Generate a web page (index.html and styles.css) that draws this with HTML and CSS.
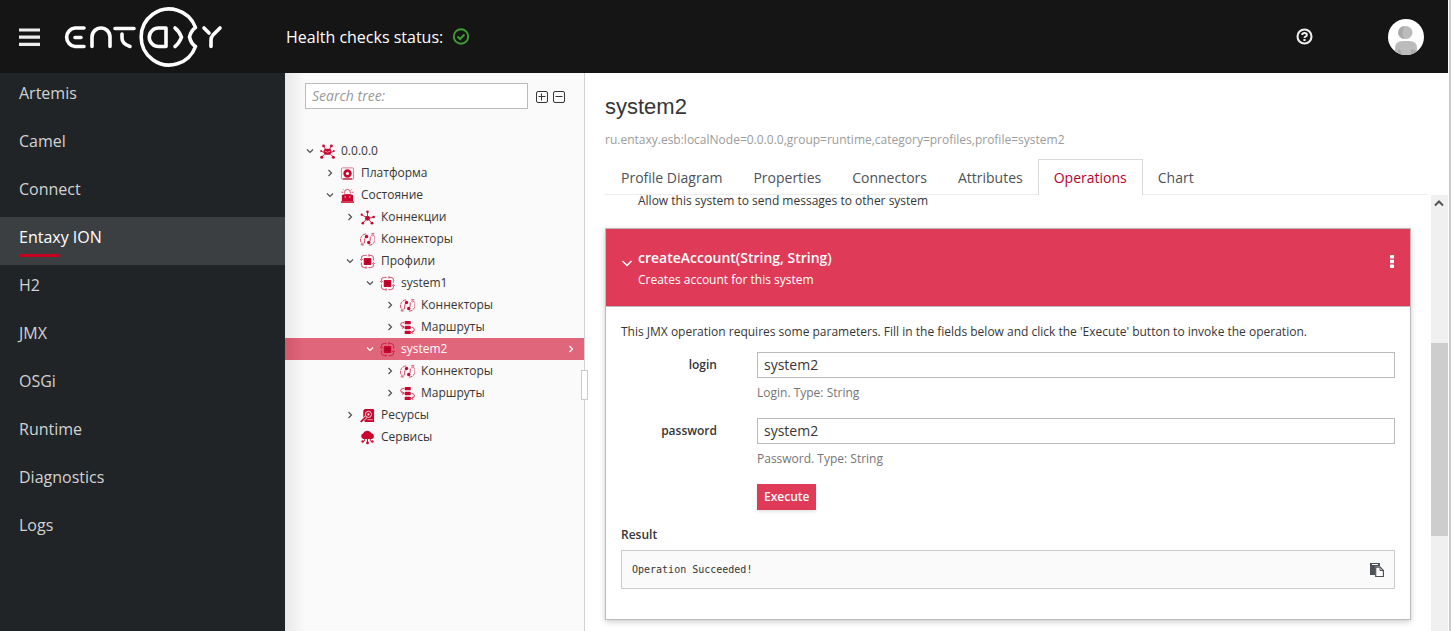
FILE: index.html
```html
<!DOCTYPE html>
<html lang="ru">
<head>
<meta charset="utf-8">
<title>Entaxy ION</title>
<link rel="stylesheet" href="styles.css">
</head>
<body>
<svg class="sprite" aria-hidden="true">
  <symbol id="down" viewBox="0 0 10 10"><path d="M2 3.500 5 6.500 8 3.500" fill="none" stroke="currentColor" stroke-width="1.200"/></symbol>
  <symbol id="right" viewBox="0 0 10 10"><path d="M3.500 2 6.500 5 3.500 8" fill="none" stroke="currentColor" stroke-width="1.200"/></symbol>
  <symbol id="cluster" viewBox="0 0 16 16"><g fill="none" stroke="currentColor" stroke-width=".9"><path d="M4 2.500 6 6M12 2.500 10 6M1.500 8 4 8.500M14.500 8 12 8.500M2 13.500 5 11M14 13.500 11 11"/></g><path d="M4 6.500 5.500 5h5L12 6.500 12.500 9 10.500 11.500H5.500L3.500 9z" fill="currentColor"/><path d="M5 7.500q3 2.500 6 0" stroke="#f3b5c0" stroke-width=".8" fill="none"/><g fill="currentColor"><circle cx="3.800" cy="2" r="1.500"/><circle cx="12.200" cy="2" r="1.500"/><circle cx="1.200" cy="7.500" r="1"/><circle cx="14.800" cy="7.500" r="1"/><circle cx="1.800" cy="14" r="1.600"/><circle cx="14.200" cy="14" r="1.600"/></g></symbol>
  <symbol id="platform" viewBox="0 0 16 16"><rect x="1.500" y="2" width="13" height="12" rx="1" fill="none" stroke="currentColor" stroke-width=".9" opacity=".6"/><circle cx="8" cy="8" r="3.100" fill="none" stroke="currentColor" stroke-width="2.800"/><path d="M3 13.800h10" stroke="currentColor" stroke-width="1.200"/></symbol>
  <symbol id="state" viewBox="0 0 16 16"><path d="M2 7.500q6-2 12 0V14H2z" fill="currentColor"/><path d="M1 15h14" stroke="currentColor" stroke-width="1.600"/><path d="M5 6V4.500a3 3 0 0 1 6 0V6M1.500 4.500h2M12.500 4.500h2M3.500 1.500l1 1M12.500 1.500l-1 1" fill="none" stroke="currentColor" stroke-width=".9" opacity=".8"/><path d="M5.500 8.500v2M10.500 8.500v2" stroke="#f3b5c0" stroke-width="1"/></symbol>
  <symbol id="connections" viewBox="0 0 16 16"><path d="M8 8.500V2M8 8.500 1.500 5M8 8.500 14.500 8M8 8.500 3 14M8 8.500 12.500 14" stroke="currentColor" stroke-width=".9" fill="none"/><g fill="currentColor"><circle cx="8" cy="8.800" r="2.600"/><circle cx="8" cy="1.800" r="1.400"/><circle cx="1.800" cy="5" r="1.200"/><circle cx="14.500" cy="7.500" r="1.400"/><circle cx="3" cy="14" r="1.400"/><circle cx="12.800" cy="14" r="1.500"/></g></symbol>
  <symbol id="connector" viewBox="0 0 16 16"><g fill="none" stroke="currentColor" stroke-width="1" opacity=".8"><path d="M6.500 2A6.400 6.400 0 0 0 2.500 13M.8 13.500 3.500 14 3.200 11.300" stroke-dasharray="3.500 .7"/><path d="M9.500 14a6.400 6.400 0 0 0 4-11.500M15.200 2 12.500 1.700l.4 2.800" stroke-dasharray="3.500 .7"/><path d="M7 4.500Q4.500 6 5 12M9 12q2.500-2 2-7"/></g><circle cx="7" cy="4.800" r="1.800" fill="currentColor"/><circle cx="9.300" cy="11.200" r="1.800" fill="currentColor"/></symbol>
  <symbol id="profile" viewBox="0 0 16 16"><rect x="4" y="4.300" width="8" height="7.400" rx=".8" fill="currentColor"/><path d="M6 7h4M6 9h4" stroke="#8c001a" stroke-width=".7"/><g fill="none" stroke="currentColor" stroke-width="1" opacity=".75"><path d="M1.500 6V4.500A3 3 0 0 1 4.500 1.500H7M9.500 1.500h2A3 3 0 0 1 14.500 4.500V7M14.500 10v1.500a3 3 0 0 1-3 3H9M6.500 14.500h-2a3 3 0 0 1-3-3V9"/><path d="M.2 5.500 1.500 7 3 5.500M9.500.2v2.600M13 10.500l1.500-1.500 1.400 1.500M6.500 13.200v2.600"/></g></symbol>
  <symbol id="route" viewBox="0 0 16 16"><g fill="currentColor"><rect x="5" y="1" width="6.500" height="3.600" rx=".9"/><rect x="5" y="6.200" width="6.500" height="3.600" rx=".9"/><rect x="5" y="11.400" width="6.500" height="3.600" rx=".9"/></g><g fill="none" stroke="currentColor" stroke-width="1" opacity=".85"><path d="M4.200 2.800H2.500Q.8 3 .8 5q0 2 3 2.800M2.500 5.800l1.800 2-2 1.200M12.300 8h1.200q1.800.6 1.800 2.500 0 2-2.800 2.700M13.800 11.300l-1.600 1.900 2 1.300"/></g></symbol>
  <symbol id="resource" viewBox="0 0 16 16"><path d="M5 1h8.500A1.500 1.500 0 0 1 15 2.500V15H5.500L3.500 13V3z" fill="currentColor"/><circle cx="9" cy="6.800" r="3.300" fill="currentColor" stroke="#f9dfe4" stroke-width="1"/><circle cx="9" cy="6.800" r="1.200" fill="#f9dfe4"/><path d="M6.500 9.500 1 14.500" stroke="#fafafa" stroke-width="3.200"/><path d="M6.400 9.500 .8 14.700" stroke="currentColor" stroke-width="1.900"/><path d="M8 12.500h6" stroke="#f9dfe4" stroke-width=".7"/></symbol>
  <symbol id="service" viewBox="0 0 16 16"><path d="M3.500 9.500a3 3 0 0 1-.3-5.700A5 5 0 0 1 12.300 3.500a3.100 3.100 0 0 1 .5 6z" fill="currentColor"/><path d="M8 9v4M5 9.500v2L3 12.500M11 9.500v2l2 1" stroke="currentColor" fill="none"/><g fill="currentColor"><circle cx="8" cy="13.800" r="1.500"/><circle cx="2.800" cy="12.300" r="1.300"/><circle cx="13.200" cy="12.300" r="1.300"/></g></symbol>
</svg>

<header class="masthead">
  <button class="plain menu" aria-label="Menu"><svg width="21" height="18" viewBox="0 0 21 18"><path d="M0 2h21M0 9.200h21M0 16.300h21" stroke="#ededed" stroke-width="3.200"/></svg></button>
  <svg class="logo" width="160" height="62" viewBox="0 0 160 62" role="img" aria-label="Entaxy">
    <g fill="none" stroke="#fff" stroke-width="3.600" stroke-linecap="round" stroke-linejoin="round">
      <path d="M21 22H12a9.300 9.300 0 0 0 0 18.500h9M12 31.500h6"/>
      <path d="M29 40.500V31a9 9 0 0 1 18 0v9.500"/>
      <path d="M52 22.500h19M59 28v4q0 6 8 8.500"/>
      <path d="M103 40.500V22H95.500a9.250 9.250 0 0 0 0 18.500z"/>
      <path d="M112 22q4 3 6.500 9.200-2.500 6.300-6.500 9.300"/>
      <path d="M132.500 21.500a28 28 0 1 0 0 19q-4.500-3-6-9.500 1.500-6.500 6-9.500z"/>
      <path d="M141 22l5 5M157 22l-7 7q-2 2-2 5v6.500"/>
    </g>
  </svg>
  <p class="health">Health checks status:
    <svg width="18" height="18" viewBox="0 0 18 18" role="img" aria-label="OK"><circle cx="9" cy="8.500" r="7.200" fill="none" stroke="#3f9c35" stroke-width="1.900"/><path d="M5.500 8.500 8.100 11 12.500 6.500" fill="none" stroke="#3f9c35" stroke-width="2"/></svg>
  </p>
  <button class="plain help" aria-label="Help"><svg width="17" height="17" viewBox="0 0 17 17"><circle cx="8.500" cy="8.500" r="7" fill="none" stroke="#ededed" stroke-width="2.100"/><path d="M6.200 7Q6.200 4.900 8.500 4.900T10.900 6.900Q10.900 8 9.400 8.600 8.500 9 8.500 10" fill="none" stroke="#ededed" stroke-width="2"/><path d="M7.400 11h2.200v2H7.400z" fill="#ededed"/></svg></button>
  <button class="plain avatar" aria-label="User"><svg width="36" height="36" viewBox="0 0 36 36"><defs><clipPath id="round"><circle cx="18" cy="18" r="18"/></clipPath></defs><g clip-path="url(#round)"><path fill="#fff" d="M0 0h36v36H0z"/><circle cx="18" cy="13.500" r="6.500" fill="#bcbcbc"/><path d="M16.500 7a6.500 6.500 0 0 0 0 13q-4-6 0-13z" fill="#aaa"/><path d="M7 36v-7q0-7 8-7h6q8 0 8 7v7z" fill="#bcbcbc"/><path d="M10 36v-7l3 3v4zM23 36v-6l5 2v4z" fill="#aaa"/></g></svg></button>
</header>

<div class="shell">
  <nav class="sidebar">
    <a href="#">Artemis</a>
    <a href="#">Camel</a>
    <a href="#">Connect</a>
    <a href="#" class="current" aria-current="page">Entaxy ION</a>
    <a href="#">H2</a>
    <a href="#">JMX</a>
    <a href="#">OSGi</a>
    <a href="#">Runtime</a>
    <a href="#">Diagnostics</a>
    <a href="#">Logs</a>
  </nav>

  <aside class="tree-pane">
    <div class="search">
      <input type="search" placeholder="Search tree:" aria-label="Search tree">
      <button class="plain" aria-label="Expand all"><svg width="12" height="12" viewBox="0 0 12 12" fill="none" stroke="#363636"><rect x=".5" y=".5" width="11" height="11" rx="1.500"/><path d="M2.500 5.500h7M5.500 2.500v7"/></svg></button>
      <button class="plain" aria-label="Collapse all"><svg width="12" height="12" viewBox="0 0 12 12" fill="none" stroke="#363636"><rect x=".5" y=".5" width="11" height="11" rx="1.500"/><path d="M2.500 5.500h7"/></svg></button>
    </div>
    <ul class="tree">
      <li class="l0"><svg class="tw"><use href="#down"/></svg><svg class="ic"><use href="#cluster"/></svg><span>0.0.0.0</span></li>
      <li class="l1"><svg class="tw"><use href="#right"/></svg><svg class="ic"><use href="#platform"/></svg><span>Платформа</span></li>
      <li class="l1"><svg class="tw"><use href="#down"/></svg><svg class="ic"><use href="#state"/></svg><span>Состояние</span></li>
      <li class="l2"><svg class="tw"><use href="#right"/></svg><svg class="ic"><use href="#connections"/></svg><span>Коннекции</span></li>
      <li class="l2"><svg class="tw"></svg><svg class="ic"><use href="#connector"/></svg><span>Коннекторы</span></li>
      <li class="l2"><svg class="tw"><use href="#down"/></svg><svg class="ic"><use href="#profile"/></svg><span>Профили</span></li>
      <li class="l3"><svg class="tw"><use href="#down"/></svg><svg class="ic"><use href="#profile"/></svg><span>system1</span></li>
      <li class="l4"><svg class="tw"><use href="#right"/></svg><svg class="ic"><use href="#connector"/></svg><span>Коннекторы</span></li>
      <li class="l4"><svg class="tw"><use href="#right"/></svg><svg class="ic"><use href="#route"/></svg><span>Маршруты</span></li>
      <li class="l3 selected"><svg class="tw"><use href="#down"/></svg><svg class="ic"><use href="#profile"/></svg><span>system2</span><svg class="tw go"><use href="#right"/></svg></li>
      <li class="l4"><svg class="tw"><use href="#right"/></svg><svg class="ic"><use href="#connector"/></svg><span>Коннекторы</span></li>
      <li class="l4"><svg class="tw"><use href="#right"/></svg><svg class="ic"><use href="#route"/></svg><span>Маршруты</span></li>
      <li class="l2"><svg class="tw"><use href="#right"/></svg><svg class="ic"><use href="#resource"/></svg><span>Ресурсы</span></li>
      <li class="l2"><svg class="tw"></svg><svg class="ic"><use href="#service"/></svg><span>Сервисы</span></li>
    </ul>
    <div class="grip"></div>
  </aside>

  <main class="content">
    <div class="intro">
      <h1>system2</h1>
      <p class="oid">ru.entaxy.esb:localNode=0.0.0.0,group=runtime,category=profiles,profile=system2</p>
      <div class="tabs" role="tablist">
        <button role="tab">Profile Diagram</button>
        <button role="tab">Properties</button>
        <button role="tab">Connectors</button>
        <button role="tab">Attributes</button>
        <button role="tab" class="active" aria-selected="true">Operations</button>
        <button role="tab">Chart</button>
      </div>
    </div>
    <div class="viewport">
      <div class="operations">
        <p class="previous">Allow this system to send messages to other system</p>
        <section class="card">
          <div class="card-head">
            <svg class="fold" width="12" height="12" viewBox="0 0 12 12"><path d="M1.500 4 6 8.500 10.500 4" fill="none" stroke="#fff" stroke-width="1.500"/></svg>
            <div class="names">
              <h2>createAccount(String, String)</h2>
              <p>Creates account for this system</p>
            </div>
            <button class="plain kebab" aria-label="Actions"><svg width="4" height="13" viewBox="0 0 4 13" fill="#fff"><rect width="4" height="3.600" rx=".6"/><rect y="4.700" width="4" height="3.600" rx=".6"/><rect y="9.400" width="4" height="3.600" rx=".6"/></svg></button>
          </div>
          <form class="card-body">
            <p class="hint">This JMX operation requires some parameters. Fill in the fields below and click the 'Execute' button to invoke the operation.</p>
            <div class="fields">
              <label for="login">login</label>
              <div><input id="login" type="text" value="system2"><p class="type">Login. Type: String</p></div>
              <label for="password">password</label>
              <div><input id="password" type="text" value="system2"><p class="type">Password. Type: String</p></div>
              <button type="button" class="execute">Execute</button>
            </div>
            <h3>Result</h3>
            <div class="result">
              <code>Operation Succeeded!</code>
              <button type="button" class="plain" aria-label="Copy"><svg width="14" height="14" viewBox="0 0 14 14"><path d="M0 0h10v3.500H5V12H0z" fill="#4d5258"/><path d="M2 1.500h6" stroke="#fff"/><path d="M5.700 4.200h4.500l3.200 3.300v6H5.700z" fill="#fff" stroke="#4d5258" stroke-width="1.200"/><path d="M10 4.200V7.500h3.500" fill="none" stroke="#4d5258"/></svg></button>
            </div>
          </form>
        </section>
      </div>
      <div class="scrollbar" aria-hidden="true">
        <svg width="10" height="8" viewBox="0 0 10 8"><path d="M1 6.500 5 2.500 9 6.500" fill="none" stroke="#555" stroke-width="2"/></svg>
        <div class="thumb"></div>
      </div>
    </div>
  </main>
</div>
</body>
</html>
```

FILE: styles.css
```css
* { box-sizing: border-box; }
html { height: 100%; }
body {
  margin: 0;
  height: 100%;
  display: flex;
  flex-direction: column;
  overflow: hidden;
  border-right: 2px solid #cbc9c9;
  padding-right: 1px;
  background: #fff;
  color: #363636;
  font: 12px/20px "Open Sans", sans-serif;
}
h1, h2, h3, p, ul { margin: 0; padding: 0; }
svg { display: block; flex: none; }
button, input { font: inherit; color: inherit; }
.plain { border: 0; padding: 0; background: none; }
.sprite { position: absolute; width: 0; height: 0; }

.masthead {
  flex: none;
  height: 73px;
  display: flex;
  align-items: center;
  padding: 0 24px 0 19px;
  background: #151515;
  color: #fff;
}
.logo { margin-left: 23px; }
.health {
  display: flex;
  align-items: center;
  gap: 9px;
  margin-left: 63px;
  font-size: 16px;
  line-height: 24px;
}
.help { margin-left: auto; }
.avatar { margin-left: 75px; }

.shell { flex: 1; min-height: 0; display: flex; }
.sidebar { flex: none; width: 285px; background: #212427; }
.sidebar a {
  display: block;
  height: 48px;
  padding: 8px 19px;
  font-size: 16px;
  line-height: 24px;
  color: #d2d2d2;
  text-decoration: none;
}
.sidebar .current { background: #3c3f42; color: #fff; }
.sidebar .current::after {
  content: "";
  display: block;
  width: 40px;
  height: 3px;
  margin-top: 5px;
  background: #c9001f;
}

.tree-pane {
  position: relative;
  flex: none;
  width: 300px;
  border-right: 1px solid #d1d1d1;
  background: linear-gradient(to right, #e8e8e8, #fafafa 20px);
}
.search { display: flex; align-items: center; gap: 5px; padding: 10px 19px 0 20px; }
.search input {
  flex: 1;
  min-width: 0;
  height: 26px;
  margin-right: 3px;
  padding: 0 6px 2px;
  border: 1px solid #bbb;
  background: #fff;
  font-size: 14px;
}
.search button { padding-top: 2px; }
.search input::placeholder { color: #999; font-style: italic; }
.tree { list-style: none; padding-top: 31px; }
.tree li { display: flex; align-items: center; height: 22px; }
.tree .tw { width: 10px; height: 10px; color: #4d5258; }
.tree .ic { width: 15px; height: 15px; margin: 1px 6px 0 5px; color: #c9062f; }
.l0 { padding-left: 20px; }
.l1 { padding-left: 40px; }
.l2 { padding-left: 60px; }
.l3 { padding-left: 80px; }
.l4 { padding-left: 100px; }
.tree .selected {
  background: linear-gradient(to right, #d0576c, #e0667b 20px);
  color: #fff;
}
.selected .tw { color: #fff; }
.tree .go { margin: 0 8px 0 auto; }
.grip {
  position: absolute;
  right: -4px;
  top: 297px;
  width: 7px;
  height: 30px;
  border: 1px solid #ccc;
  background: #fff;
}

.content { flex: 1; min-width: 0; display: flex; flex-direction: column; }
.intro { flex: none; padding: 21px 20px 0; }
h1 { font: 22px/26px "Liberation Sans", Arial, sans-serif; }
.oid { margin-top: 10px; line-height: 20px; color: #9c9c9c; }
.tabs { display: flex; margin-top: 9px; border-bottom: 1px solid #ededed; }
.tabs button {
  height: 36px;
  margin-bottom: -1px;
  padding: 0 15px;
  border: 1px solid transparent;
  border-bottom: 0;
  background: none;
  color: #4d5258;
  font-size: 14px;
}
.tabs button + button { margin-left: -1px; }
.tabs .active { border-color: #d9d9d9; background: #fff; color: #b8002c; }

.viewport { flex: 1; min-height: 0; display: flex; }
.operations { flex: 1; min-width: 0; padding: 0 20px; }
.previous { padding-left: 33px; line-height: 12px; }
.card { margin-top: 21px; border: 1px solid #bbb; box-shadow: 0 2px 6px rgba(3, 3, 3, 0.2); }
.card-head {
  display: flex;
  align-items: flex-start;
  padding: 18px 16px 16px 15px;
  border-bottom: 1px solid #bbb;
  background: #df3a57;
  color: #fff;
}
.fold { margin-top: 10px; }
.kebab { margin-top: 8px; }
.names { flex: 1; padding-left: 5px; }
h2 { font-size: 14px; line-height: 22px; font-weight: 600; }
.names p { line-height: 21px; }
.card-body { padding: 15px 15px 30px; }
.fields {
  display: grid;
  grid-template-columns: 96px 1fr;
  column-gap: 40px;
  row-gap: 15px;
  margin-top: 10px;
}
.fields label { line-height: 26px; font-weight: 600; text-align: right; }
.fields input {
  display: block;
  width: 100%;
  height: 26px;
  padding: 0 6px 2px;
  border: 1px solid #bbb;
  font-size: 14px;
}
.type { margin-top: 5px; color: #757575; }
.execute {
  grid-column: 2;
  justify-self: start;
  height: 26px;
  padding: 0 7px;
  border: 0;
  background: #df3a57;
  color: #fff;
  font-weight: 600;
  box-shadow: 0 2px 3px rgba(3, 3, 3, 0.1);
}
h3 { margin-top: 15px; font-size: 12px; line-height: 20px; font-weight: 600; }
.result {
  display: flex;
  align-items: center;
  justify-content: space-between;
  height: 39px;
  margin-top: 5px;
  padding: 0 10px;
  border: 1px solid #ccc;
  background: #fafafa;
}
.result code { font: 10px/17px "DejaVu Sans Mono", monospace; }
.scrollbar { flex: none; width: 17px; padding-top: 4px; background: #f0f0f0; }
.scrollbar svg { margin-left: 3px; }
.thumb { height: 193px; margin-top: 136px; background: #cdcdcd; }
```
